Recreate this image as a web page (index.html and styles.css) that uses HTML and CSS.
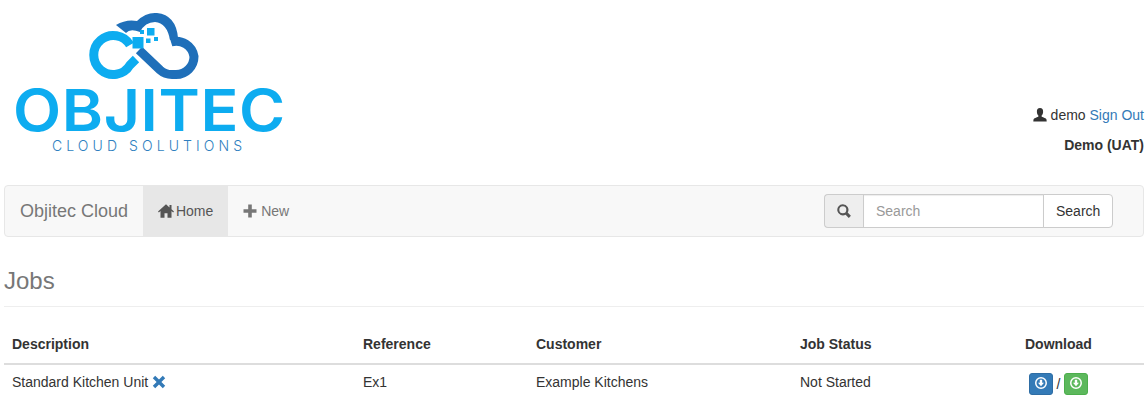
FILE: index.html
```html
<!DOCTYPE html>
<html lang="en">

<head>
    <meta charset="UTF-8">
    <meta name="viewport" content="width=device-width, initial-scale=1.0">
    <title>Objitec Cloud - Jobs</title>
    <link rel="stylesheet" href="styles.css">
</head>

<body>
    <div class="page">
        <header class="top">
            <svg class="logo" width="300" height="170" viewBox="0 0 300 170">
                <!-- cloud -->
                <path class="dark-fill" d="M116 25 Q126 19 137 21 Q146 12 157 13 Q176 15 178 38 L170 40 Q167 23 155 22 Q145 22 140 32 Q130 28 126 33 Z" />
                <path class="dark-line" d="M139 50 L160 70 Q165 74.5 172 74.5 L176 74.5 A18 18 0 0 0 194 56.5 A18 18 0 0 0 171 42" />
                <path class="light-line" d="M130 45 A19.5 19.5 0 1 0 130 65 L136 59" />
                <rect class="light-fill" x="132.500" y="37" width="11" height="11.500" />
                <rect class="light-fill" x="147" y="28" width="7.500" height="7.500" />
                <rect class="light-fill" x="140" y="30" width="4" height="4" />
                <rect class="light-fill" x="146" y="38.500" width="4.500" height="4.500" />
                <rect class="light-fill" x="154" y="37" width="4" height="4" />
                <text class="logo-name" transform="translate(13 131) scale(1.08 1)" textLength="252" lengthAdjust="spacing">OBJITEC</text>
                <text class="logo-sub" x="52" y="151" textLength="190" lengthAdjust="spacing">CLOUD SOLUTIONS</text>
            </svg>
            <div class="account">
                <p>
                    <svg class="glyph" viewBox="0 0 14 14">
                        <path d="M7 0C4.800 0 3.700 1.700 3.900 3.900C4 5.500 4.500 6.700 5.400 7.500L5.300 8.700C3.500 9.500 0.800 10 0.500 11.500L0.300 13.500L13.700 13.500L13.500 11.500C13.200 10 10.500 9.500 8.700 8.700L8.600 7.500C9.500 6.700 10 5.500 10.100 3.900C10.300 1.700 9.200 0 7 0Z" />
                    </svg>
                    demo <a href="#">Sign Out</a>
                </p>
                <p><strong>Demo (UAT)</strong></p>
            </div>
        </header>

        <nav class="navbar">
            <a class="brand" href="#">Objitec Cloud</a>
            <ul class="nav">
                <li class="active">
                    <a href="#">
                        <svg class="glyph glyph-wide" viewBox="0 0 16 14">
                            <path d="M8 0.200L0 7.500L0.900 8.500L2.500 7.100V13.800H6.500V9.300H9.500V13.800H13.500V7.100L15.100 8.500L16 7.500L13.500 5.200V1H11.500V3.400Z" />
                        </svg>
                        Home
                    </a>
                </li>
                <li>
                    <a href="#">
                        <svg class="glyph" viewBox="0 0 14 14">
                            <path d="M5.200 0.500H8.800V5.200H13.500V8.800H8.800V13.500H5.200V8.800H0.500V5.200H5.200Z" />
                        </svg>
                        New
                    </a>
                </li>
            </ul>
            <form class="search">
                <span class="addon">
                    <svg class="glyph" viewBox="0 0 14 14">
                        <path d="M5.800 0.200A5.600 5.600 0 1 0 8.600 10.700L11.800 13.900L13.900 11.800L10.700 8.600A5.600 5.600 0 0 0 5.800 0.200ZM5.800 2.300A3.500 3.500 0 1 1 5.800 9.300A3.500 3.500 0 1 1 5.800 2.300Z" />
                    </svg>
                </span>
                <input class="search-input" type="text" placeholder="Search">
                <button class="search-btn" type="button">Search</button>
            </form>
        </nav>

        <h2 class="title">Jobs</h2>

        <table class="jobs">
            <colgroup>
                <col class="c-desc">
                <col class="c-ref">
                <col class="c-cust">
                <col class="c-status">
                <col class="c-down">
            </colgroup>
            <thead>
                <tr>
                    <th>Description</th>
                    <th>Reference</th>
                    <th>Customer</th>
                    <th>Job Status</th>
                    <th>Download</th>
                </tr>
            </thead>
            <tbody>
                <tr>
                    <td>
                        Standard Kitchen Unit
                        <a href="#">
                            <svg class="glyph" viewBox="0 0 14 14">
                                <path d="M3.200 0.800L7 4.600L10.800 0.800L13.200 3.200L9.400 7L13.200 10.800L10.800 13.200L7 9.400L3.200 13.200L0.800 10.800L4.600 7L0.800 3.200Z" />
                            </svg>
                        </a>
                    </td>
                    <td>Ex1</td>
                    <td>Example Kitchens</td>
                    <td>Not Started</td>
                    <td>
                        <div class="downloads">
                            <a class="btn-xs blue" href="#">
                                <svg class="glyph" viewBox="0 0 12 12">
                                    <path fill-rule="evenodd" d="M6 0A6 6 0 1 1 6 12A6 6 0 1 1 6 0ZM6 1.500A4.500 4.500 0 1 0 6 10.500A4.500 4.500 0 1 0 6 1.500ZM4.800 2.800H7.200V5.800H9L6 9.300L3 5.800H4.800Z" />
                                </svg>
                            </a>
                            <span>/</span>
                            <a class="btn-xs green" href="#">
                                <svg class="glyph" viewBox="0 0 12 12">
                                    <path fill-rule="evenodd" d="M6 0A6 6 0 1 1 6 12A6 6 0 1 1 6 0ZM6 1.500A4.500 4.500 0 1 0 6 10.500A4.500 4.500 0 1 0 6 1.500ZM4.800 2.800H7.200V5.800H9L6 9.300L3 5.800H4.800Z" />
                                </svg>
                            </a>
                        </div>
                    </td>
                </tr>
            </tbody>
        </table>
    </div>
</body>

</html>
```

FILE: styles.css
```css
* {
    box-sizing: border-box;
}

body {
    margin: 0;
    font-family: "Liberation Sans", Arial, sans-serif;
    font-size: 14px;
    line-height: 20px;
    color: #333;
    background-color: #fff;
}

a {
    color: #337ab7;
    text-decoration: none;
}

.page {
    padding: 0 4px;
}

.glyph {
    display: inline-block;
    width: 14px;
    height: 14px;
    fill: currentColor;
    vertical-align: -2px;
}

.glyph-wide {
    width: 16px;
    margin-right: -2px;
}

/* header */
.top {
    display: flex;
    justify-content: space-between;
    align-items: flex-end;
    height: 185px;
    margin-left: -4px;
    padding-bottom: 20px;
}

.logo {
    display: block;
    align-self: flex-start;
}

.dark-fill {
    fill: #1f6fb9;
}

.light-fill {
    fill: #0dacf0;
}

.dark-line {
    fill: none;
    stroke: #1f6fb9;
    stroke-width: 9;
}

.light-line {
    fill: none;
    stroke: #0dacf0;
    stroke-width: 9;
}

.logo-name {
    font-family: Inter, sans-serif;
    font-size: 58px;
    font-weight: 600;
    fill: #0dacf0;
}

.logo-sub {
    font-family: Inter, sans-serif;
    font-size: 14px;
    font-weight: 300;
    fill: #2f7fc0;
}

.account {
    text-align: right;
}

.account p {
    margin: 0 0 10px;
}

/* navbar */
.navbar {
    display: flex;
    align-items: stretch;
    height: 52px;
    margin-bottom: 11px;
    background-color: #f8f8f8;
    border: 1px solid #e7e7e7;
    border-radius: 4px;
}

.brand {
    padding: 15px;
    font-size: 18px;
    color: #777;
}

.nav {
    display: flex;
    margin: 0;
    padding: 0;
    list-style: none;
}

.nav a {
    display: block;
    padding: 15px;
    color: #777;
}

.nav .active a {
    color: #555;
    background-color: #e7e7e7;
}

.search {
    display: flex;
    margin: 8px 30px 8px auto;
}

.addon {
    display: flex;
    align-items: center;
    justify-content: center;
    width: 39px;
    color: #555;
    background-color: #eee;
    border: 1px solid #ccc;
    border-right: 0;
    border-radius: 4px 0 0 4px;
}

.search-input {
    width: 181px;
    padding: 6px 12px;
    font: inherit;
    color: #555;
    border: 1px solid #ccc;
    border-radius: 0;
    box-shadow: inset 0 1px 1px rgba(0, 0, 0, .075);
}

.search-input::placeholder {
    color: #999;
}

.search-btn {
    width: 70px;
    margin-left: -1px;
    padding: 6px 12px;
    font: inherit;
    color: #333;
    background-color: #fff;
    border: 1px solid #ccc;
    border-radius: 0 4px 4px 0;
}

/* title */
.title {
    margin: 0 0 19px;
    padding: 20px 0 12px;
    font-size: 24px;
    line-height: 26px;
    font-weight: 400;
    color: #777;
    border-bottom: 1px solid #eee;
}

/* table */
.jobs {
    width: 100%;
    table-layout: fixed;
    border-collapse: collapse;
}

.c-desc {
    width: 351px;
}

.c-ref {
    width: 173px;
}

.c-cust {
    width: 264px;
}

.c-status {
    width: 225px;
}

.jobs th {
    padding: 8px 8px 9px;
    text-align: left;
    border-bottom: 2px solid #ddd;
}

.jobs td {
    padding: 7px 8px 8px;
    vertical-align: top;
}

.downloads {
    display: flex;
    align-items: center;
    gap: 3.500px;
    margin-top: 1px;
    padding-left: 4px;
}

.btn-xs {
    display: block;
    padding: 1px 5px;
    font-size: 12px;
    line-height: 18px;
    color: #fff;
    border: 1px solid;
    border-radius: 3px;
}

.btn-xs .glyph {
    width: 12px;
    height: 12px;
    vertical-align: -1px;
}

.blue {
    background-color: #337ab7;
    border-color: #2e6da4;
}

.green {
    background-color: #5cb85c;
    border-color: #4cae4c;
}
```
